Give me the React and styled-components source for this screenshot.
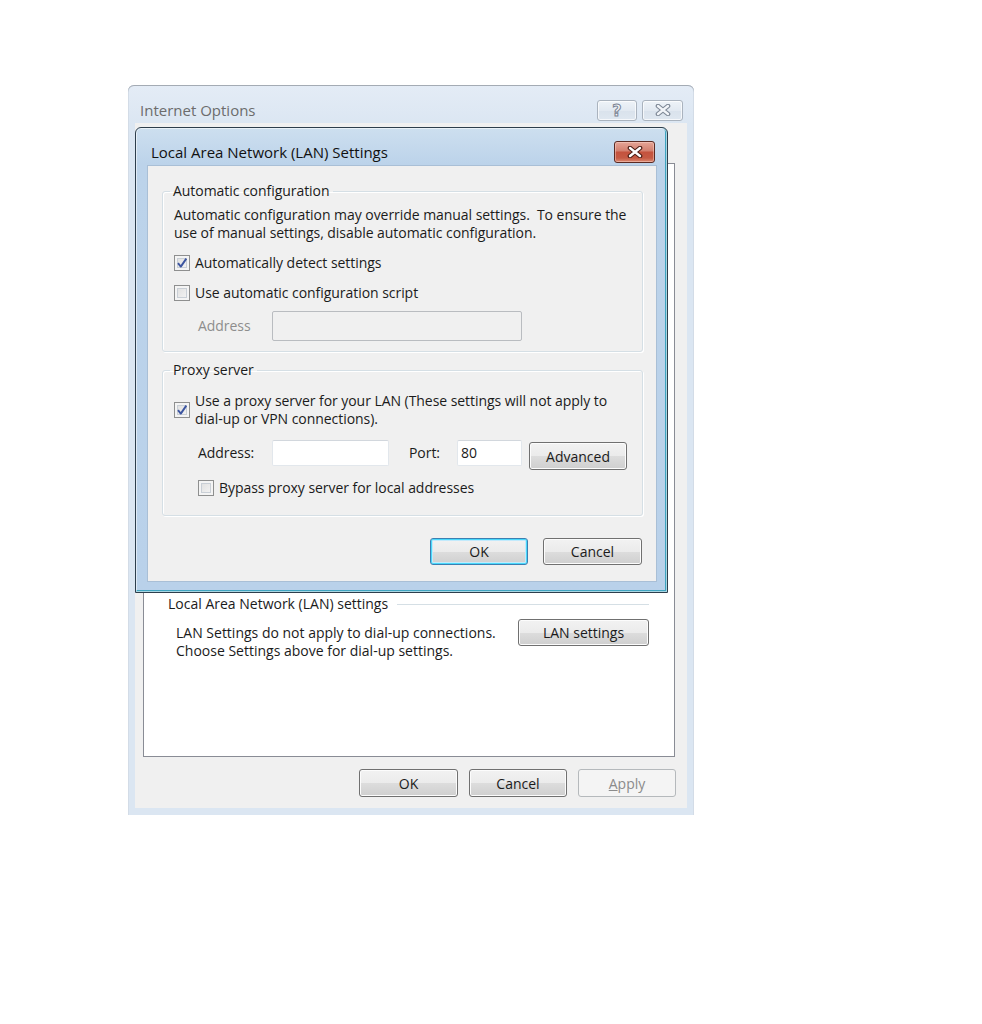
import styled, { createGlobalStyle } from "styled-components";

const GlobalStyle = createGlobalStyle`
  body {
    margin: 0;
    background: #ffffff;
    font-family: "Open Sans", "Noto Sans", "Liberation Sans", sans-serif;
    color: #1b1b1b;
  }
`;

const Page = styled.div`
  min-height: 1024px;
  box-sizing: border-box;
  padding: 85px 0 0 128px;
`;

const OuterWindow = styled.div`
  position: relative;
  width: 566px;
  height: 730px;
  box-sizing: border-box;
  padding: 0 7px 7px 7px;
  display: flex;
  flex-direction: column;
  border-radius: 6px 6px 0 0;
  background: linear-gradient(#e4ecf6, #dbe6f2 40px, #dbe6f2);
  box-shadow: inset 0 1px 0 #a4abb4, inset 1px 0 0 #d3dce7, inset -1px 0 0 #d3dce7;
`;

const OuterTitleBar = styled.div`
  height: 38px;
  box-sizing: border-box;
  padding: 12px 4px 0 5px;
  display: flex;
  align-items: center;
  justify-content: space-between;
`;

const OuterTitle = styled.span`
  font-size: 15px;
  color: #6c6c6c;
`;

const CaptionGroup = styled.div`
  display: flex;
  gap: 5px;
`;

const CaptionButton = styled.div`
  width: ${(p) => p.$w}px;
  height: 21px;
  box-sizing: border-box;
  border: 1px solid #aab3be;
  border-radius: 3px;
  background: linear-gradient(#eef3f8, #e2e9f1 50%, #d9e2ec 50%, #dfe7f0);
  box-shadow: inset 0 0 0 1px rgba(255, 255, 255, 0.7);
  display: flex;
  align-items: center;
  justify-content: center;
  font-size: 16px;
  font-weight: bold;
  color: #f4f6f9;
  -webkit-text-stroke: 1px #7b8594;
  font-family: "DejaVu Sans", sans-serif;
`;

const OuterClient = styled.div`
  flex: 1;
  background: #f0f0f0;
  padding: 40px 11px 11px 8px;
  display: flex;
  flex-direction: column;
`;

const TabPage = styled.div`
  flex: 1;
  margin-right: 1px;
  background: #ffffff;
  border: 1px solid #898c95;
  padding: 431px 25px 0 24px;
  font-size: 14px;
`;

const SectionHeader = styled.div`
  display: flex;
  align-items: center;
  line-height: 18px;
`;

const SectionRule = styled.div`
  flex: 1;
  height: 1px;
  margin-left: 9px;
  background: #d5dfe5;
  box-shadow: 0 1px 0 #ffffff;
`;

const SectionBody = styled.div`
  display: flex;
  justify-content: space-between;
  align-items: flex-start;
  margin-top: 6px;
  padding-left: 8px;
`;

const Note = styled.div`
  margin-top: 5px;
  line-height: 18px;
  font-size: 14px;
`;

const Button = styled.button`
  width: ${(p) => p.$w}px;
  height: ${(p) => p.$h || 27}px;
  box-sizing: border-box;
  padding: 0;
  font-family: inherit;
  font-size: 14px;
  color: ${(p) => (p.disabled ? "#8b8b8b" : "#1b1b1b")};
  border-radius: 3px;
  border: 1px solid
    ${(p) => (p.disabled ? "#b5b9bc" : p.$default ? "#3c7fb1" : "#707070")};
  background: ${(p) =>
    p.disabled
      ? "#f4f4f4"
      : "linear-gradient(#f2f2f2, #ebebeb 50%, #dddddd 50%, #cfcfcf)"};
  box-shadow: ${(p) =>
    p.$default
      ? "inset 0 0 0 1px #48d8fb, inset 0 0 0 2px #c2eafc"
      : p.disabled
      ? "none"
      : "inset 0 0 0 1px #fcfcfc"};
  margin-top: ${(p) => p.$top || 0}px;
`;

const ButtonRow = styled.div`
  display: flex;
  justify-content: flex-end;
  gap: ${(p) => p.$gap}px;
  margin-top: ${(p) => p.$top}px;
  padding-right: ${(p) => p.$right || 0}px;
`;

/* ---- LAN settings dialog, floating over the Internet Options window ---- */

const Dialog = styled.div`
  position: absolute;
  left: 7px;
  top: 42px;
  width: 533px;
  height: 466px;
  box-sizing: border-box;
  border: 1px solid #2d3e4c;
  border-radius: 6px 6px 0 0;
  padding: 0 10px 10px 11px;
  display: flex;
  flex-direction: column;
  background: linear-gradient(#cddfef, #bcd3ea 36px, #b9d1ea);
  box-shadow: inset 0 0 0 1px rgba(255, 255, 255, 0.55),
    inset -1px -1px 0 1px #3fa4c0;
`;

const DialogTitleBar = styled.div`
  height: 37px;
  box-sizing: border-box;
  padding: 10px 2px 0 4px;
  display: flex;
  align-items: center;
  justify-content: space-between;
`;

const DialogTitle = styled.span`
  font-size: 15px;
  color: #111;
`;

const CloseButton = styled.div`
  width: 41px;
  height: 22px;
  box-sizing: border-box;
  border: 1px solid #5b2a22;
  border-radius: 3px;
  background: linear-gradient(#e5a597, #d27f6e 45%, #c4523d 50%, #c55a44 80%, #dc8a72);
  box-shadow: inset 0 0 0 1px rgba(255, 220, 210, 0.45);
  display: flex;
  align-items: center;
  justify-content: center;
`;

const DialogClient = styled.div`
  flex: 1;
  background: #f0f0f0;
  border: 1px solid #a9bfd6;
  padding: 16px 13px 15px 14px;
  display: flex;
  flex-direction: column;
  font-size: 14px;
  letter-spacing: -0.05px;
`;

const Group = styled.fieldset`
  margin: ${(p) => p.$top}px 0 0 0;
  padding: ${(p) => p.$pad};
  border: 1px solid #d5dfe5;
  border-radius: 3px;
  box-shadow: inset 1px 1px 0 #ffffff, 1px 1px 0 #ffffff;
  min-width: 0;
`;

const Legend = styled.legend`
  margin-left: -4px;
  padding: 0 3px 0 3px;
  line-height: 18px;
  font-size: 14px;
`;

const Paragraph = styled.div`
  line-height: 18px;
`;

const CheckRow = styled.label`
  display: flex;
  align-items: center;
  gap: 5px;
  min-height: 20px;
  line-height: 18px;
  margin-top: ${(p) => p.$top || 0}px;
  margin-left: ${(p) => p.$indent || 0}px;
`;

const Box = styled.span`
  flex: none;
  width: 16px;
  height: 16px;
  box-sizing: border-box;
  border: 1px solid #8e8f8f;
  background: linear-gradient(135deg, #dcdcdc, #f7f7f7);
  box-shadow: inset 0 0 0 2px #f4f4f4, inset 0 0 0 3px #c9cfd6;
  display: flex;
  align-items: center;
  justify-content: center;
`;

const FieldRow = styled.div`
  display: flex;
  align-items: flex-start;
  margin-top: ${(p) => p.$top}px;
  padding-left: 24px;
`;

const FieldLabel = styled.span`
  width: ${(p) => p.$w}px;
  box-sizing: border-box;
  padding-left: ${(p) => p.$indent || 0}px;
  line-height: ${(p) => p.$h}px;
  color: ${(p) => (p.$disabled ? "#8d8d8d" : "inherit")};
`;

const TextBox = styled.div`
  width: ${(p) => p.$w}px;
  height: ${(p) => p.$h}px;
  box-sizing: border-box;
  border: 1px solid ${(p) => (p.$disabled ? "#b9bcc0" : "#e2e7ec")};
  border-top-color: ${(p) => (p.$disabled ? "#b9bcc0" : "#d2d7dd")};
  border-radius: 2px;
  background: ${(p) => (p.$disabled ? "#f0f0f0" : "#ffffff")};
  padding-left: 3px;
  line-height: ${(p) => p.$h - 2}px;
  margin-right: ${(p) => p.$gap || 0}px;
`;

const Check = ({ checked }) => (
  <Box>
    {checked && (
      <svg width="12" height="12" viewBox="0 0 12 12">
        <path
          d="M2 6.2 L4.8 9.6 L10.3 1.6"
          fill="none"
          stroke="#3c55a0"
          strokeWidth="1.9"
          strokeLinejoin="round"
        />
      </svg>
    )}
  </Box>
);

const XGlyph = ({ outline, fill }) => (
  <svg width="16" height="12" viewBox="0 0 16 12">
    <path d="M3 2 L13 10 M13 2 L3 10" stroke={outline} strokeWidth="4.6" strokeLinecap="round" />
    <path d="M3 2 L13 10 M13 2 L3 10" stroke={fill} strokeWidth="2.4" strokeLinecap="round" />
  </svg>
);

export default function App() {
  return (
    <Page>
      <GlobalStyle />
      <OuterWindow>
        <OuterTitleBar>
          <OuterTitle>Internet Options</OuterTitle>
          <CaptionGroup>
            <CaptionButton $w={40}>?</CaptionButton>
            <CaptionButton $w={41}>
              <XGlyph outline="#7d8795" fill="#f2f5f9" />
            </CaptionButton>
          </CaptionGroup>
        </OuterTitleBar>

        <OuterClient>
          <TabPage>
            <SectionHeader>
              <span>Local Area Network (LAN) settings</span>
              <SectionRule />
            </SectionHeader>
            <SectionBody>
              <Note>
                LAN Settings do not apply to dial-up connections.
                <br />
                Choose Settings above for dial-up settings.
              </Note>
              <Button $w={131}>LAN settings</Button>
            </SectionBody>
          </TabPage>
          <ButtonRow $gap={11} $top={12}>
            <Button $w={99} $h={28}>OK</Button>
            <Button $w={98} $h={28}>Cancel</Button>
            <Button $w={98} $h={28} disabled>
              <u>A</u>pply
            </Button>
          </ButtonRow>
        </OuterClient>

        <Dialog>
          <DialogTitleBar>
            <DialogTitle>Local Area Network (LAN) Settings</DialogTitle>
            <CloseButton>
              <XGlyph outline="#4a1c14" fill="#ffffff" />
            </CloseButton>
          </DialogTitleBar>

          <DialogClient>
            <Group $top={0} $pad="6px 11px 10px 11px">
              <Legend>Automatic configuration</Legend>
              <Paragraph>
                Automatic configuration may override manual settings.&nbsp; To ensure the
                <br />
                use of manual settings, disable automatic configuration.
              </Paragraph>
              <CheckRow $top={11}>
                <Check checked />
                Automatically detect settings
              </CheckRow>
              <CheckRow $top={10}>
                <Check />
                Use automatic configuration script
              </CheckRow>
              <FieldRow $top={8}>
                <FieldLabel $w={74} $h={30} $disabled>
                  Address
                </FieldLabel>
                <TextBox $w={250} $h={30} $disabled />
              </FieldRow>
            </Group>

            <Group $top={9} $pad="13px 11px 17px 11px">
              <Legend>Proxy server</Legend>
              <CheckRow>
                <Check checked />
                <span>
                  Use a proxy server for your LAN (These settings will not apply to
                  <br />
                  dial-up or VPN connections).
                </span>
              </CheckRow>
              <FieldRow $top={12}>
                <FieldLabel $w={74} $h={26}>
                  Address:
                </FieldLabel>
                <TextBox $w={117} $h={26} />
                <FieldLabel $w={68} $h={26} $indent={20}>
                  Port:
                </FieldLabel>
                <TextBox $w={65} $h={26} $gap={7}>
                  80
                </TextBox>
                <Button $w={98} $h={28} $top={2}>
                  Advanced
                </Button>
              </FieldRow>
              <CheckRow $top={8} $indent={24}>
                <Check />
                Bypass proxy server for local addresses
              </CheckRow>
            </Group>

            <ButtonRow $gap={15} $top={22} $right={1}>
              <Button $w={98} $default>
                OK
              </Button>
              <Button $w={99}>Cancel</Button>
            </ButtonRow>
          </DialogClient>
        </Dialog>
      </OuterWindow>
    </Page>
  );
}
